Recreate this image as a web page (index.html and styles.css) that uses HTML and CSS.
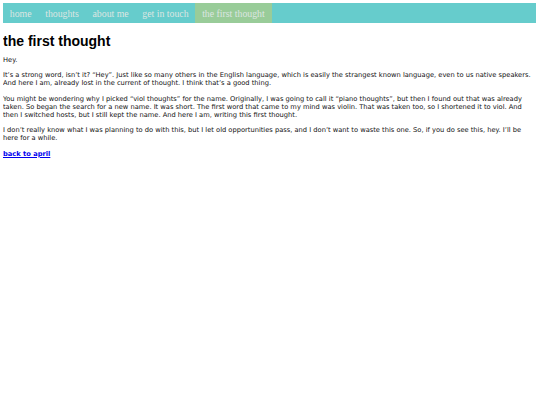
FILE: index.html
```html
<!DOCTYPE html>
<html lang="en">
<head>
<meta charset="utf-8">
<title>the first thought</title>
<link rel="stylesheet" href="styles.css">
</head>
<body>
<nav class="nav">
  <a class="nav-item" href="#">home</a>
  <a class="nav-item" href="#">thoughts</a>
  <a class="nav-item" href="#">about me</a>
  <a class="nav-item" href="#">get in touch</a>
  <a class="nav-item active" href="#">the first thought</a>
</nav>
<main class="post">
  <h1 class="title">the first thought</h1>
  <p>Hey.</p>
  <p>It’s a strong word, isn’t it? “Hey”. Just like so many others in the English language, which is easily the strangest known language, even to us native speakers. And here I am, already lost in the current of thought. I think that’s a good thing.</p>
  <p>You might be wondering why I picked “viol thoughts” for the name. Originally, I was going to call it “piano thoughts”, but then I found out that was already taken. So began the search for a new name. It was short. The first word that came to my mind was violin. That was taken too, so I shortened it to viol. And then I switched hosts, but I still kept the name. And here I am, writing this first thought.</p>
  <p>I don’t really know what I was planning to do with this, but I let old opportunities pass, and I don’t want to waste this one. So, if you do see this, hey. I’ll be here for a while.</p>
  <p><a class="back" href="#">back to april</a></p>
</main>
</body>
</html>
```

FILE: styles.css
```css
html, body {
  background: #ffffff;
}
body {
  margin: 3px 4px 3px 3px;
  font-family: "DejaVu Sans", sans-serif;
  font-size: 6.7px;
  color: #111;
}
.nav {
  display: flex;
  background: #66cccc;
  height: 20px;
}
.nav-item {
  display: flex;
  align-items: center;
  padding: 0 6.8px;
  font-family: "Liberation Serif", serif;
  font-size: 9.8px;
  color: #dde6e2;
  text-decoration: none;
}
.nav-item.active {
  background: #99cc99;
}
.title {
  font-family: "Liberation Sans", Arial, sans-serif;
  font-size: 14px;
  font-weight: bold;
  margin: 10px 0 7px;
  color: #000;
}
.post p {
  margin: 7px 0;
  line-height: 8.2px;
}
.back {
  font-weight: bold;
  color: #0000ee;
  text-decoration: underline;
}
```
